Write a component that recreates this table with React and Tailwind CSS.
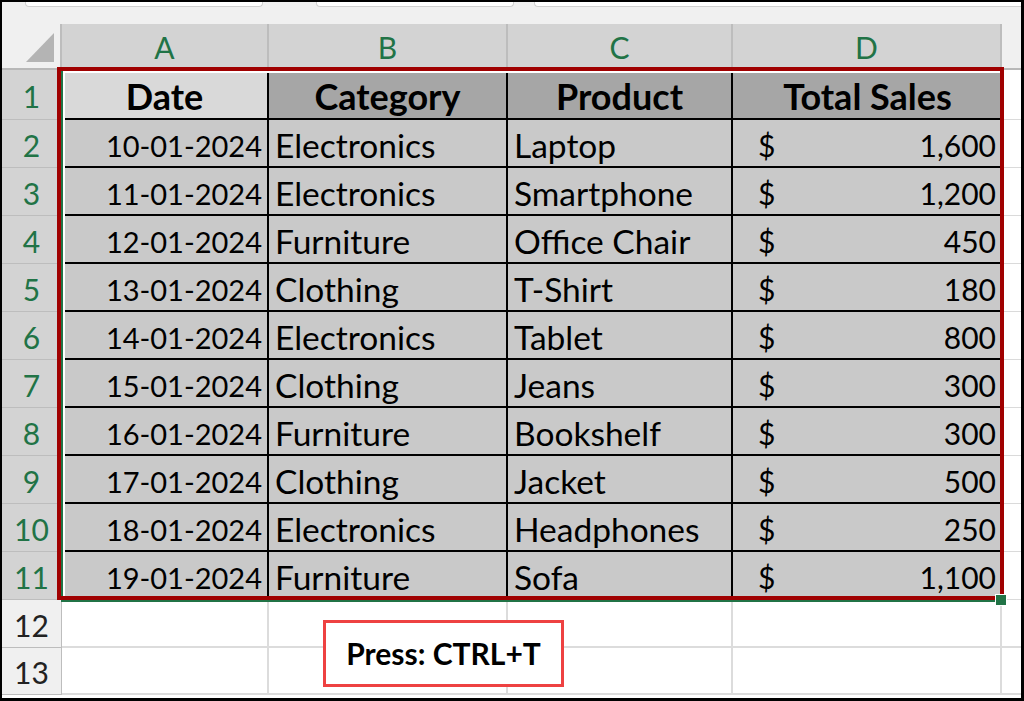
import React from 'react';

const rows = [
    ['10-01-2024', 'Electronics', 'Laptop', '1,600'],
    ['11-01-2024', 'Electronics', 'Smartphone', '1,200'],
    ['12-01-2024', 'Furniture', 'Office Chair', '450'],
    ['13-01-2024', 'Clothing', 'T-Shirt', '180'],
    ['14-01-2024', 'Electronics', 'Tablet', '800'],
    ['15-01-2024', 'Clothing', 'Jeans', '300'],
    ['16-01-2024', 'Furniture', 'Bookshelf', '300'],
    ['17-01-2024', 'Clothing', 'Jacket', '500'],
    ['18-01-2024', 'Electronics', 'Headphones', '250'],
    ['19-01-2024', 'Furniture', 'Sofa', '1,100'],
];

const font = { fontFamily: 'Lato, "Open Sans", sans-serif' };

function RowHead({ n, active, h }) {
    return (
        <div className={`${h} w-[60px] shrink-0 flex items-center justify-center pt-[3px] border-r border-b border-[#bdbdbd] text-[30px] ${active ? 'bg-[#d3d3d3] text-[#217346]' : 'bg-[#f0f0f0] text-[#222]'}`}>
            {n}
        </div>
    );
}

export default function App() {
    return (
        <div className="w-[1024px] h-[701px] bg-white border-l-2 border-t-2 border-r-[3px] border-b-[3px] border-black relative overflow-hidden" style={font}>
            {/* formula bar remnants */}
            <div className="h-[22px] bg-[#f0f0f0] flex gap-[20px] pl-[23px]">
                <div className="w-[238px] h-[5px] bg-white border-b border-x border-[#d0d0d0] rounded-b-[4px]" />
                <div className="w-[198px] h-[5px] bg-white border-b border-x border-[#d0d0d0] rounded-b-[4px] ml-[33px]" />
                <div className="flex-1 h-[5px] bg-white border-b border-l border-[#d0d0d0] rounded-bl-[4px]" />
            </div>

            {/* column headers */}
            <div className="h-[46px] flex border-b-2 border-[#b8b8b8]">
                <div className="w-[60px] shrink-0 bg-[#f0f0f0] border-r-2 border-[#bdbdbd] flex items-end justify-end pr-[6px] pb-[6px]">
                    <svg width="28" height="29" viewBox="0 0 28 29"><polygon points="28,0 28,29 0,29" fill="#b4b4b4" /></svg>
                </div>
                {[['A', 'w-[207px]'], ['B', 'w-[239px]'], ['C', 'w-[225px]'], ['D', 'w-[269px]']].map(([l, w]) => (
                    <div key={l} className={`${w} shrink-0 bg-[#d3d3d3] border-r-2 border-[#bdbdbd] flex items-center justify-center pt-[2px] text-[30px] text-[#217346]`}>{l}</div>
                ))}
                <div className="flex-1 bg-[#f0f0f0]" />
            </div>

            {/* header row */}
            <div className="flex h-[50px]">
                <RowHead n="1" active h="h-[50px]" />
                <div className="w-[207px] shrink-0 bg-[#d9d9d9] border-r-2 border-b-2 border-black flex items-center justify-center pt-[4px] text-[36px] font-bold text-black">Date</div>
                <div className="w-[239px] shrink-0 bg-[#a6a6a6] border-r-2 border-b-2 border-black flex items-center justify-center pt-[4px] text-[36px] font-bold text-black">Category</div>
                <div className="w-[225px] shrink-0 bg-[#a6a6a6] border-r-2 border-b-2 border-black flex items-center justify-center pt-[4px] text-[36px] font-bold text-black">Product</div>
                <div className="w-[269px] shrink-0 bg-[#a6a6a6] border-b-2 border-black flex items-center justify-center pt-[4px] text-[36px] font-bold text-black">Total Sales</div>
                <div className="flex-1 border-b border-[#dadada]" />
            </div>

            {rows.map((r, i) => (
                <div key={i} className="flex h-[48px] text-black">
                    <RowHead n={i + 2} active h="h-[48px]" />
                    <div className="w-[207px] shrink-0 bg-[#c9c9c9] border-r-2 border-b-2 border-black flex items-center justify-end pr-[5px] pt-[5px] text-[29px]">{r[0]}</div>
                    <div className="w-[239px] shrink-0 bg-[#c9c9c9] border-r-2 border-b-2 border-black flex items-center pl-[6px] pt-[5px] text-[33.5px]">{r[1]}</div>
                    <div className="w-[225px] shrink-0 bg-[#c9c9c9] border-r-2 border-b-2 border-black flex items-center pl-[6px] pt-[5px] text-[33.5px]">{r[2]}</div>
                    <div className="w-[269px] shrink-0 bg-[#c9c9c9] border-b-2 border-black flex items-center justify-between pl-[25px] pr-[6px] pt-[5px] text-[30px]">
                        <span>$</span>
                        <span>{r[3]}</span>
                    </div>
                    <div className="flex-1 border-b border-[#dadada]" />
                </div>
            ))}

            {/* empty rows */}
            {[['12', 'h-[48px]'], ['13', 'h-[47px]']].map(([n, h]) => (
                <div key={n} className={`flex ${h}`}>
                    <RowHead n={n} h={h} />
                    <div className="w-[207px] shrink-0 border-r-2 border-b-2 border-[#dcdcdc]" />
                    <div className="w-[239px] shrink-0 border-r-2 border-b-2 border-[#dcdcdc]" />
                    <div className="w-[225px] shrink-0 border-r-2 border-b-2 border-[#dcdcdc]" />
                    <div className="w-[269px] shrink-0 border-r-2 border-b-2 border-[#dcdcdc]" />
                    <div className="flex-1 border-b-2 border-[#dcdcdc]" />
                </div>
            ))}

            {/* excel selection */}
            <div className="absolute left-[59px] top-[68px] w-[941px] h-[532px] border-l-2 border-b-2 border-[#217346]" />
            <div className="absolute left-[61px] top-[69px] w-[938px] h-[528px] border-l-2 border-t-2 border-white" />
            {/* red highlight */}
            <div className="absolute left-[55px] top-[65px] w-[947px] h-[533px] border-4 border-[#a00000]" />
            <div className="absolute left-[993px] top-[592px] w-[12px] h-[12px] bg-[#217346] border border-white" />

            {/* callout */}
            <div className="absolute left-[321px] top-[618px] w-[241px] h-[67px] bg-white border-[3px] border-[#ee4141] flex items-center justify-center text-[30px] font-bold text-black">
                Press: CTRL+T
            </div>
        </div>
    );
}
